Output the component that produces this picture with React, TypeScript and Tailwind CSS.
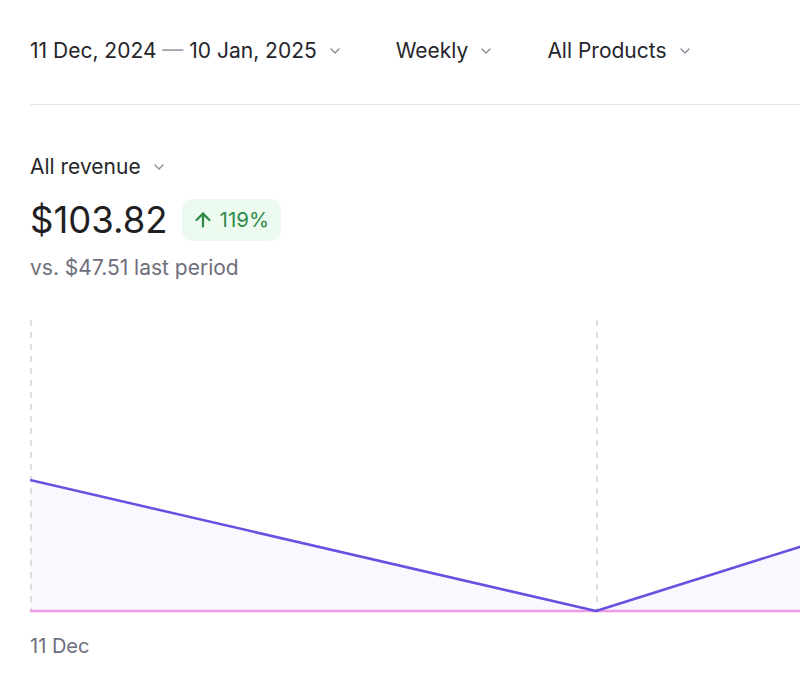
import React from 'react';
import { ChevronDown, ArrowUp } from 'lucide-react';

const filters = ['11 Dec, 2024 — 10 Jan, 2025', 'Weekly', 'All Products'];

function Filter({ label }: { label: string }) {
  const parts = label.split(' — ');
  return (
    <button className="flex items-center gap-[10px] text-[21px] leading-7 text-[#26262b]">
      {parts.length === 2 ? (
        <span>
          {parts[0]} <span className="text-[#a3a3ad]">—</span> {parts[1]}
        </span>
      ) : (
        <span>{label}</span>
      )}
      <ChevronDown className="w-4 h-4 text-[#8a8a96]" strokeWidth={2} />
    </button>
  );
}

// weekly points, x in px from the chart's left edge, y from its top
const points = [
  { x: 0, y: 160 },
  { x: 566, y: 291 },
  { x: 1132, y: 113 },
];

function RevenueChart() {
  const baseline = 291;
  const line = points.map((p) => `${p.x},${p.y}`).join(' ');
  const area = `M0,${baseline} L${points.map((p) => `${p.x},${p.y}`).join(' L')} L1132,${baseline} Z`;
  return (
    <div className="h-[294px] overflow-hidden">
      <svg width="1200" height="294" viewBox="0 0 1200 294" className="block">
        <path d={area} fill="#faf8ff" />
        {points.map((p) => (
          <line
            key={p.x}
            x1={p.x + 1}
            x2={p.x + 1}
            y1={0}
            y2={baseline}
            stroke="#d4d4d8"
            strokeWidth={1.5}
            strokeDasharray="6 6"
          />
        ))}
        <line x1={0} x2={1200} y1={baseline} y2={baseline} stroke="#ee9be6" strokeWidth={2.5} />
        <polyline points={line} fill="none" stroke="#6a4fe0" strokeWidth={2.5} strokeLinejoin="round" />
      </svg>
    </div>
  );
}

export default function App() {
  return (
    <div className="w-screen h-[688px] overflow-hidden bg-white pl-[30px] font-['Inter',sans-serif]">
      <div className="flex items-center gap-[53px] pt-[37px] pb-[39px] border-b border-[#e6e6ea]">
        {filters.map((f) => (
          <Filter key={f} label={f} />
        ))}
      </div>

      <button className="mt-[48px] flex items-center gap-[10px] text-[21px] leading-7 text-[#26262b]">
        All revenue
        <ChevronDown className="w-4 h-4 text-[#8a8a96]" strokeWidth={2} />
      </button>

      <div className="mt-[18px] flex items-center gap-[14px]">
        <span className="text-[36.5px] leading-[42px] text-[#1f1f24]">$103.82</span>
        <span className="flex items-center gap-[6px] h-[42px] pl-[10px] pr-[12px] rounded-[10px] bg-[#edfaef] text-[20.5px] text-[#2f8a4a]">
          <ArrowUp className="w-[22px] h-[22px]" strokeWidth={2.5} />
          119%
        </span>
      </div>

      <p className="mt-[13px] text-[21px] leading-7 text-[#6e6e7c]">vs. $47.51 last period</p>

      <div className="mt-[38px]">
        <RevenueChart />
      </div>

      <p className="mt-[20px] text-[20px] leading-6 text-[#6e6e7c]">11 Dec</p>
    </div>
  );
}
